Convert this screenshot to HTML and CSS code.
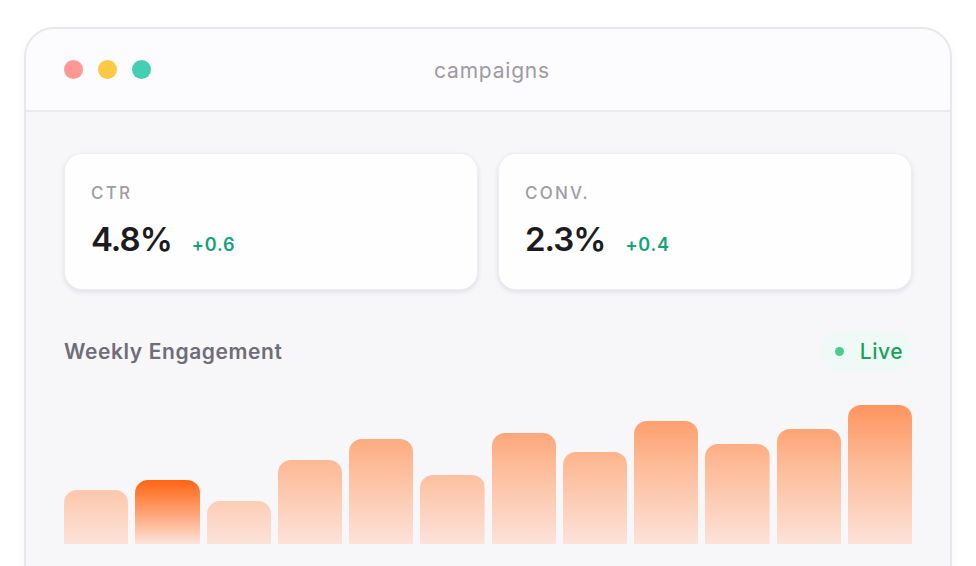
FILE: index.html
```html
<!DOCTYPE html>
<html lang="en">
<head>
    <meta charset="UTF-8">
    <meta name="viewport" content="width=device-width, initial-scale=1.0">
    <title>campaigns</title>
    <link rel="stylesheet" href="styles.css">
</head>
<body>
    <div class="window">
        <div class="titlebar">
            <div class="dots">
                <span class="dot red"></span>
                <span class="dot yellow"></span>
                <span class="dot green"></span>
            </div>
            <div class="title">campaigns</div>
            <div></div>
        </div>
        <div class="content">
            <div class="stats">
                <div class="stat">
                    <div class="stat-label">CTR</div>
                    <div class="stat-row">
                        <span class="stat-value">4.8%</span>
                        <span class="stat-delta">+0.6</span>
                    </div>
                </div>
                <div class="stat">
                    <div class="stat-label">CONV.</div>
                    <div class="stat-row">
                        <span class="stat-value">2.3%</span>
                        <span class="stat-delta">+0.4</span>
                    </div>
                </div>
            </div>
            <div class="chart-head">
                <div class="chart-title">Weekly Engagement</div>
                <div class="live"><span class="live-dot"></span>Live</div>
            </div>
            <div class="chart">
                <div class="bar" style="height: 54px"></div>
                <div class="bar hot" style="height: 64px"></div>
                <div class="bar" style="height: 43px"></div>
                <div class="bar" style="height: 84px"></div>
                <div class="bar" style="height: 105px"></div>
                <div class="bar" style="height: 69px"></div>
                <div class="bar" style="height: 111px"></div>
                <div class="bar" style="height: 92px"></div>
                <div class="bar" style="height: 123px"></div>
                <div class="bar" style="height: 100px"></div>
                <div class="bar" style="height: 115px"></div>
                <div class="bar" style="height: 139px"></div>
            </div>
        </div>
    </div>
</body>
</html>
```

FILE: styles.css
```css
body {
    font-family: Inter, "Noto Sans", sans-serif;
    margin: 0;
    background: #ffffff;
    overflow: hidden;
}
.window {
    margin: 27px 0 0 24px;
    width: 928px;
    height: 600px;
    box-sizing: border-box;
    border: 2px solid #e8e7ec;
    border-radius: 30px;
    background: #f7f6f9;
    overflow: hidden;
    box-shadow: 0 2px 8px rgba(40, 30, 60, 0.04);
}
.titlebar {
    display: grid;
    grid-template-columns: 1fr auto 1fr;
    align-items: center;
    height: 81px;
    padding: 0 38px;
    background: #fcfbfd;
    border-bottom: 2px solid #eceaef;
}
.dots {
    display: flex;
    gap: 15px;
}
.dot {
    width: 19px;
    height: 19px;
    border-radius: 50%;
}
.dot.red { background: #ff9893; }
.dot.yellow { background: #ffc845; }
.dot.green { background: #44cfb3; }
.title {
    font-size: 21px;
    color: #9c9aa3;
    letter-spacing: 0.8px;
    padding: 2px 0 0 8px;
}
.content {
    padding: 41px 38px 0;
}
.stats {
    display: grid;
    grid-template-columns: 1fr 1fr;
    gap: 20px;
}
.stat {
    height: 137px;
    box-sizing: border-box;
    padding: 29px 26px;
    background: #fefefe;
    border: 1px solid #eeedf1;
    border-radius: 18px;
    box-shadow: 0 2px 5px rgba(30, 20, 50, 0.1);
}
.stat-label {
    font-size: 17px;
    letter-spacing: 2.2px;
    color: #9e9ca5;
    font-weight: 500;
}
.stat-row {
    display: flex;
    align-items: baseline;
    gap: 20px;
    margin-top: 16px;
}
.stat-value {
    font-size: 33px;
    font-weight: 600;
    color: #1c1b20;
    letter-spacing: -1px;
}
.stat-delta {
    font-size: 18px;
    font-weight: 600;
    color: #14a27a;
    letter-spacing: 0.8px;
}
.chart-head {
    display: flex;
    justify-content: space-between;
    align-items: center;
    margin-top: 41px;
}
.chart-title {
    font-size: 21px;
    font-weight: 600;
    color: #6f6d78;
    letter-spacing: 0.6px;
}
.live {
    display: flex;
    align-items: center;
    gap: 16px;
    height: 40px;
    padding: 0 9px 0 15px;
    border-radius: 20px;
    background: #effaf7;
    color: #1aa25c;
    font-size: 21px;
    font-weight: 500;
    letter-spacing: 0.5px;
}
.live-dot {
    width: 9px;
    height: 9px;
    border-radius: 50%;
    background: #4ccb91;
}
.chart {
    display: flex;
    align-items: flex-end;
    gap: 7px;
    height: 160px;
    margin-top: 13px;
}
.bar {
    flex: 1;
    border-radius: 13px 13px 0 0;
    background: linear-gradient(to top, #fce2d9, #fdb994 55%, #ff8d54) bottom / 100% 150px no-repeat;
}
.bar.hot {
    background: linear-gradient(to top, #fde3da, #ff9a66 55%, #ff6512);
}
```
